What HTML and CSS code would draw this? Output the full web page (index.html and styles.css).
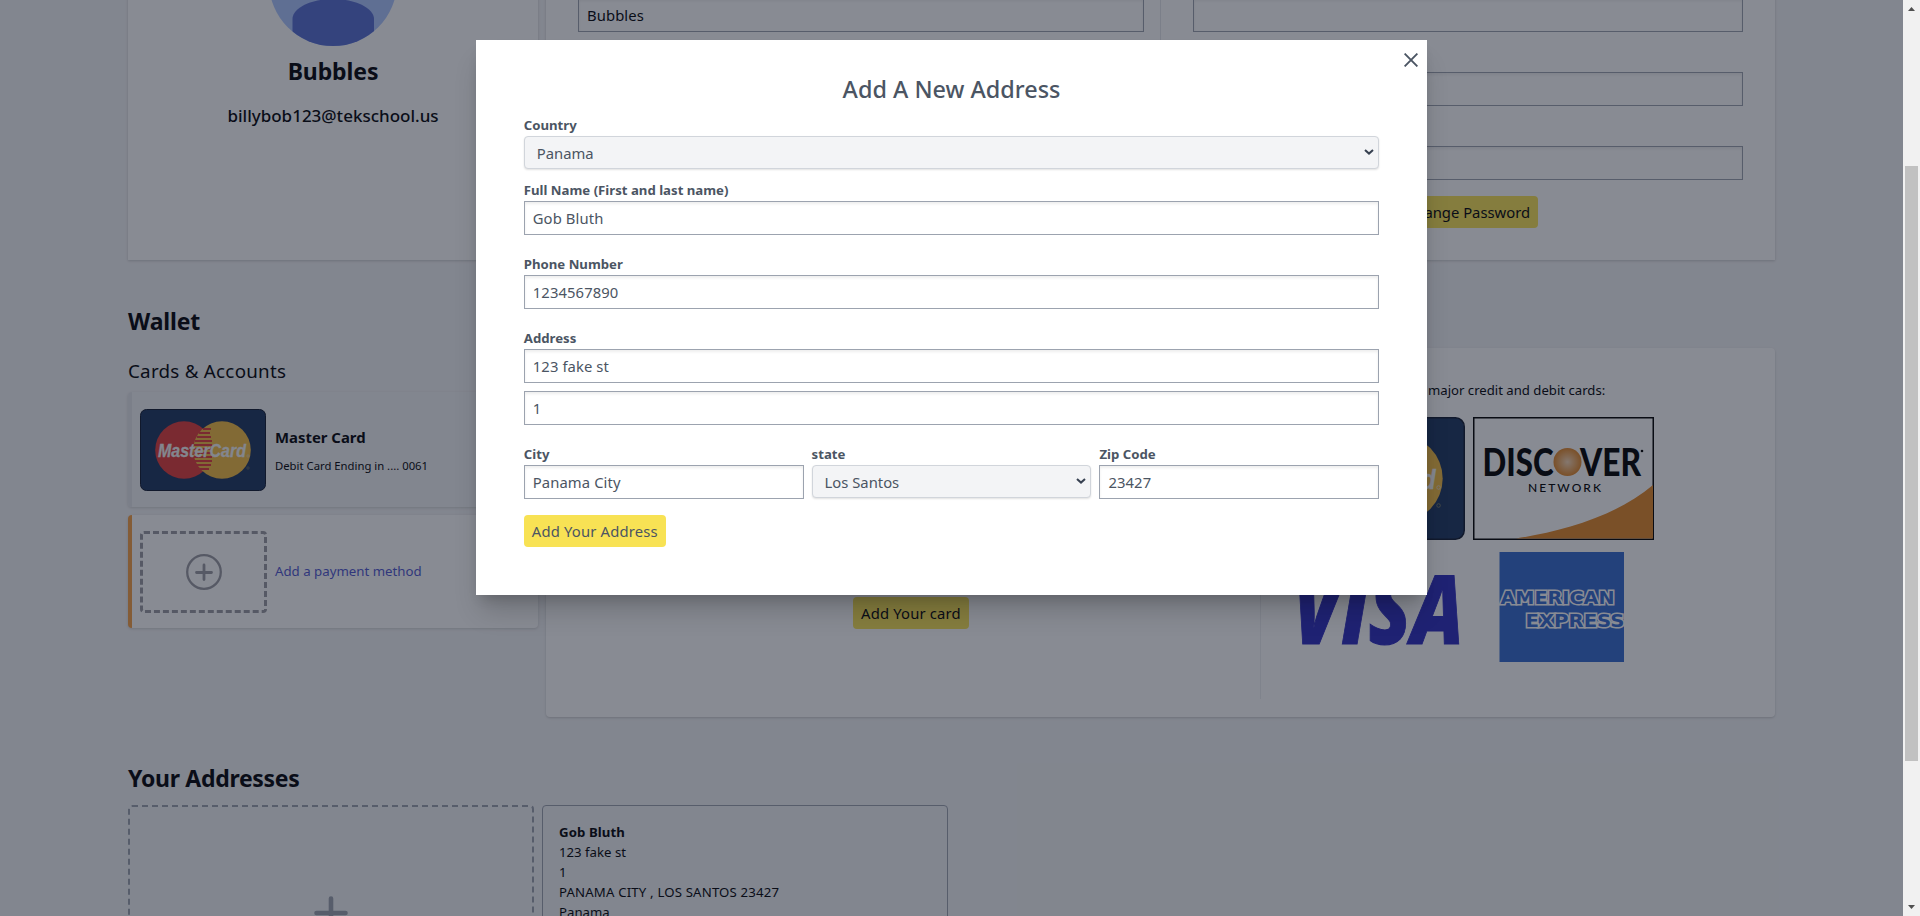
FILE: index.html
```html
<!DOCTYPE html>
<html lang="en">
<head>
<meta charset="utf-8">
<title>Account</title>
<link rel="stylesheet" href="styles.css">
</head>
<body>
<svg width="0" height="0" class="defs">
  <symbol id="mastercard" viewBox="0 0 126 82" preserveAspectRatio="none">
    <rect x=".5" y=".5" width="125" height="81" rx="6" fill="#1d3661" stroke="#101a30"/>
    <circle cx="44" cy="41" r="28.800" fill="#e33c3a"/>
    <circle cx="82" cy="41" r="28.800" fill="#f3bc43"/>
    <path d="M63 20h8M59 24h11M57 28h14M55 32h17M54 36h18M54 40h18M54 44h18M54 48h18M55 52h17M57 56h14M60 60h9" stroke="#e33c3a" stroke-width="2"/>
    <text x="18" y="48" class="mc-text" textLength="88" lengthAdjust="spacingAndGlyphs">MasterCard</text>
    <circle cx="108" cy="47" r="1.200" fill="none" stroke="#ddd" stroke-width=".5"/>
    <circle cx="108" cy="59" r="1.200" fill="none" stroke="#886" stroke-width=".5"/>
  </symbol>
</svg>
<div class="app">
  <div class="viewport">
    <main class="page">
      <section class="profile">
        <div class="card user">
          <svg class="avatar" viewBox="0 0 128 128">
            <clipPath id="round"><circle cx="64" cy="64" r="64"/></clipPath>
            <g clip-path="url(#round)">
              <rect width="128" height="128" fill="#adc6ff"/>
              <path d="M23.500 128V101C23.500 90 42 81 64 81S105 90 105 101V128Z" fill="#576ed3"/>
            </g>
          </svg>
          <h1 class="name">Bubbles</h1>
          <p class="email">billybob123@tekschool.us</p>
        </div>
        <div class="card settings">
          <div class="col info"><div class="input">Bubbles</div></div>
          <div class="col pass">
            <div class="input"></div><div class="input"></div><div class="input"></div>
            <button class="btn change">Change Password</button>
          </div>
        </div>
      </section>

      <h2 class="heading">Wallet</h2>
      <section class="wallet">
        <div class="methods">
          <h3 class="sub">Cards &amp; Accounts</h3>
          <div class="method selected">
            <svg class="thumb"><use href="#mastercard"/></svg>
            <div><p class="brand">Master Card</p><p class="ending">Debit Card Ending in .... 0061</p></div>
          </div>
          <div class="method add">
            <div class="slot">
              <svg width="38" height="38" viewBox="0 0 38 38" fill="none" stroke="#9b9ba2" stroke-width="2.300" stroke-linecap="round"><circle cx="19" cy="19" r="16.800"/><path d="M19 12v14.500M11.500 19.500h15" stroke-width="2.800"/></svg>
            </div>
            <p class="link">Add a payment method</p>
          </div>
        </div>
        <div class="card accepted">
          <div class="add-card"><button class="btn">Add Your card</button></div>
          <div class="brands">
            <p class="accept">major credit and debit cards:</p>
            <div class="logos">
              <svg class="logo"><use href="#mastercard"/></svg>
              <svg class="logo" viewBox="0 0 181 123">
                <defs><radialGradient id="glow"><stop offset="0" stop-color="#f7d7b5"/><stop offset="1" stop-color="#e38829"/></radialGradient></defs>
                <rect x=".7" y=".7" width="179.600" height="121.600" fill="#fff" stroke="#000" stroke-width="1.600"/>
                <path d="M43 121.500C85 115 143 100 180 68V121.500Z" fill="#e38829"/>
                <text x="9.500" y="58.500" class="dc-text" textLength="71" lengthAdjust="spacingAndGlyphs">DISC</text>
                <circle cx="94.500" cy="45" r="14" fill="url(#glow)"/>
                <text x="107" y="58.500" class="dc-text" textLength="61" lengthAdjust="spacingAndGlyphs">VER</text>
                <circle cx="169" cy="34" r="1.300"/>
                <text x="55" y="74.500" class="dc-small" textLength="73" lengthAdjust="spacing">NETWORK</text>
              </svg>
              <svg class="logo" viewBox="0 0 181 110">
                <text x="11" y="91.500" class="visa-text" textLength="171" lengthAdjust="spacingAndGlyphs">VISA</text>
              </svg>
              <svg class="logo" viewBox="0 0 181 110">
                <rect x="26.500" width="124.500" height="110" fill="#356acf"/>
                <g class="amex-text">
                  <text x="27.500" y="51.500" textLength="114" lengthAdjust="spacingAndGlyphs">AMERICAN</text>
                  <text x="52.500" y="74.500" textLength="99" lengthAdjust="spacingAndGlyphs">EXPRESS</text>
                </g>
              </svg>
            </div>
          </div>
        </div>
      </section>

      <h2 class="heading second">Your Addresses</h2>
      <section class="addresses">
        <div class="new-address">
          <svg width="40" height="40" viewBox="0 0 40 40" stroke="#9ca3af" stroke-width="4.600" stroke-linecap="round"><path d="M20 5.500v29M5.500 20h29"/></svg>
        </div>
        <div class="address">
          <p class="who">Gob Bluth</p><p>123 fake st</p><p>1</p><p class="caps">PANAMA CITY , LOS SANTOS 23427</p><p>Panama</p>
        </div>
      </section>
    </main>

    <div class="overlay">
      <div class="modal">
        <svg class="close" viewBox="0 0 14 14" stroke="#4b5563" stroke-width="1.900"><path d="M.6.6 13.400 13.400M13.400.6.6 13.400"/></svg>
        <h2 class="title">Add A New Address</h2>
        <label class="label">Country</label>
        <div class="select">Panama<svg class="chev" viewBox="0 0 10 6"><path d="M1 1l4 3.600L9 1"/></svg></div>
        <label class="label after-select">Full Name (First and last name)</label>
        <div class="input">Gob Bluth</div>
        <label class="label spaced">Phone Number</label>
        <div class="input">1234567890</div>
        <label class="label spaced">Address</label>
        <div class="input">123 fake st</div>
        <div class="input line2">1</div>
        <div class="row">
          <div><label class="label">City</label><div class="input">Panama City</div></div>
          <div><label class="label">state</label><div class="select">Los Santos<svg class="chev" viewBox="0 0 10 6"><path d="M1 1l4 3.600L9 1"/></svg></div></div>
          <div><label class="label">Zip Code</label><div class="input">23427</div></div>
        </div>
        <button class="btn">Add Your Address</button>
      </div>
    </div>
  </div>
  <div class="scrollbar">
    <svg width="17" height="17"><path d="M5 11h7L8.500 7Z" fill="#505050"/></svg>
    <div class="thumb-bar"></div>
    <svg width="17" height="17"><path d="M5 6h7L8.500 10Z" fill="#505050"/></svg>
  </div>
</div>
</body>
</html>
```
FILE: styles.css
```css
* { box-sizing: border-box; margin: 0; }
body { font-family: "Noto Sans", "Open Sans", sans-serif; font-size: 14.800px; color: #020308; background: #f3f4f6; }
svg { display: block; flex: none; }
.defs { position: absolute; }
.app { display: flex; width: 1920px; height: 916px; overflow: hidden; }
.viewport { position: relative; width: 1903px; height: 916px; overflow: hidden; background: #f3f4f6; }
.page { display: flow-root; margin: -100px 128px 0; }
.card { background: #fff; box-shadow: 0 1px 3px rgba(0,0,0,.1), 0 1px 2px rgba(0,0,0,.08); }
.profile { display: grid; grid-template-columns: 410px 1229px; gap: 8px; height: 360px; }
.user { display: flex; flex-direction: column; align-items: center; padding-top: 18px; }
.avatar { width: 128px; height: 128px; }
.name { font-size: 23px; line-height: 32px; margin-top: 9px; font-weight: 700; letter-spacing: -.1px; }
.email { font-size: 17px; line-height: 28px; margin-top: 15px; font-weight: 500; }
.settings { display: flex; }
.col { padding: 98px 32px 0; }
.info { width: 615px; height: 344px; padding-right: 16px; border-right: 1px solid #e5e7eb; }
.pass { flex: 1; display: flex; flex-direction: column; align-items: center; }
.pass .input { width: 100%; margin-bottom: 40px; }
.pass .input:nth-of-type(3) { margin-bottom: 16px; }
.input { height: 34px; padding: 0 8px; line-height: 32px; border: 1px solid #9ca3af; background: #fff; box-shadow: inset 0 2px 3px rgba(0,0,0,.07); letter-spacing: .1px; }
.btn { display: block; height: 32px; padding: 0 8px; border: 0; border-radius: 4px; background: #f8e254; color: inherit; font: inherit; line-height: 32px; letter-spacing: .18px; white-space: nowrap; }
.change { letter-spacing: 0; }
.heading { font-size: 23px; line-height: 32px; margin-top: 45px; font-weight: 700; letter-spacing: -.15px; }
.wallet { display: grid; grid-template-columns: 410px 1229px; gap: 8px; margin-top: 11px; height: 369px; }
.sub { font-size: 18.800px; line-height: 28px; font-weight: 400; letter-spacing: .25px; margin: 9px 0 7px; }
.method { display: flex; align-items: center; gap: 8px; height: 115px; padding-left: 8px; border-left: 4px solid #e5e7eb; border-radius: 4px; box-shadow: 0 1px 3px rgba(0,0,0,.14); }
.method.add { height: 113px; margin-top: 8px; border-left-color: #f6a045; background: #fff; }
.thumb { width: 126px; height: 82px; margin-right: 1px; margin-left: 0; }
.slot { width: 127px; height: 82px; border: 3px dashed #9b9ba2; border-radius: 4px; display: flex; align-items: center; justify-content: center; }
.brand { font-weight: 700; font-size: 14.900px; line-height: 22px; }
.ending { font-size: 11.300px; line-height: 16px; margin-top: 10px; }
.link { font-size: 13.250px; color: #5057d0; margin-top: -2px; }
.accepted { display: grid; grid-template-columns: 715px 1fr; border-radius: 4px; padding: 16px 0 18px; }
.add-card { border-right: 1px solid #eceef0; padding: 233px 0 0 307px; }
.brands { padding: 16px 0 0 19px; }
.accept { font-size: 13.150px; line-height: 20px; padding-left: 148px; }
.logos { display: grid; grid-template-columns: 185px 181px; column-gap: 8px; row-gap: 12px; margin-top: 17px; }
.logo { width: 100%; height: 110px; }
.logo:nth-child(-n+2) { height: 123px; }
.mc-text { font: italic 700 18.500px "Liberation Sans", sans-serif; fill: #f4f4f4; stroke: #f4f4f4; stroke-width: .3px; }
.dc-text { font: 900 38px Lato, sans-serif; }
.dc-small { font: 500 12px Lato, sans-serif; }
.visa-text { font: italic 800 95px "Open Sans", sans-serif; fill: #2d2cbf; stroke: #2d2cbf; stroke-width: 1px; }
.amex-text { font: 700 18px "DejaVu Sans", sans-serif; fill: #356acf; stroke: #fff; stroke-width: 3px; paint-order: stroke; }
.second { margin-top: 45px; letter-spacing: -.3px; }
.addresses { display: grid; grid-template-columns: 406px 406px; gap: 8px; margin-top: 11px; height: 216px; }
.new-address { border: 2px dashed #9ca3af; border-radius: 4px; display: flex; align-items: center; justify-content: center; }
.address { border: 1px solid #9ca3af; border-radius: 4px; padding: 16px; font-size: 13.200px; line-height: 20px; }
.who { font-weight: 700; letter-spacing: .1px; }
.caps { letter-spacing: .17px; }
.overlay { position: absolute; inset: 0; display: flex; justify-content: center; align-items: flex-start; padding-top: 40px; background: rgba(17,24,39,.5); }
.modal { position: relative; width: 951.500px; height: 555px; padding: 33px 48px 0; background: #fff; color: #4b5563; box-shadow: 0 20px 25px -5px rgba(0,0,0,.18), 0 8px 12px -5px rgba(0,0,0,.16); }
.close { position: absolute; top: 13px; right: 9px; width: 14px; height: 14px; }
.title { font-size: 23.400px; line-height: 32px; margin-bottom: 11px; font-weight: 500; text-align: center; }
.label { display: block; height: 20px; font-size: 13.200px; line-height: 19px; font-weight: 700; }
.select { display: flex; align-items: center; justify-content: space-between; height: 33px; padding: 1px 4px 0 12px; background: #f3f4f6; border: 1px solid #d1d5db; border-radius: 4px; box-shadow: 0 1px 2px rgba(0,0,0,.12); }
.chev { width: 10px; height: 6px; margin-bottom: 2px; fill: none; stroke: #374151; stroke-width: 2; }
.after-select { margin-top: 12px; }
.spaced { margin-top: 20px; }
.line2 { margin-top: 8px; }
.row { display: grid; grid-template-columns: repeat(3, 1fr); gap: 8px; margin: 20px 0 16px; }
.scrollbar { display: flex; flex-direction: column; width: 17px; height: 916px; background: #f1f1f1; }
.thumb-bar { width: 13px; height: 595px; margin: 149px 0 auto 2px; flex: none; background: #c1c1c1; }
```
